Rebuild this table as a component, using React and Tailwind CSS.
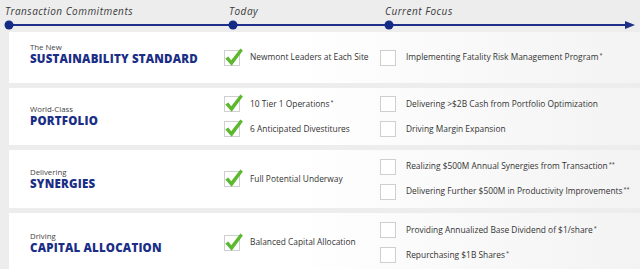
import React from "react";

const CARDS = [
  {
    pre: "The New",
    title: "SUSTAINABILITY STANDARD",
    h: "h-[51px]",
    labelShift: "mb-[8px]",
    today: [["Newmont Leaders at Each Site", ""]],
    focus: [["Implementing Fatality Risk Management Program", "*"]],
  },
  {
    pre: "World-Class",
    title: "PORTFOLIO",
    h: "h-[57px]",
    labelShift: "mb-[2px]",
    today: [
      ["10 Tier 1 Operations", "*"],
      ["6 Anticipated Divestitures", ""],
    ],
    focus: [
      ["Delivering >$2B Cash from Portfolio Optimization", ""],
      ["Driving Margin Expansion", ""],
    ],
  },
  {
    pre: "Delivering",
    title: "SYNERGIES",
    h: "h-[58px]",
    labelShift: "",
    today: [["Full Potential Underway", ""]],
    focus: [
      ["Realizing $500M Annual Synergies from Transaction", "**"],
      ["Delivering Further $500M in Productivity Improvements", "**"],
    ],
  },
  {
    pre: "Driving",
    title: "CAPITAL ALLOCATION",
    h: "h-[59px]",
    labelShift: "",
    today: [["Balanced Capital Allocation", ""]],
    focus: [
      ["Providing Annualized Base Dividend of $1/share", "*"],
      ["Repurchasing $1B Shares", "*"],
    ],
  },
];

function Box({ checked }) {
  return (
    <svg width="22" height="20" viewBox="0 0 22 20" className="shrink-0 overflow-visible">
      <rect x="1.5" y="2.5" width="15" height="15" fill="#fff" stroke="#cfcfcf" strokeWidth="1" />
      {checked && (
        <path d="M2.3 10.6 L5.3 8.4 L8.2 12.2 L17.4 0.6 L19.9 2.5 L8.7 17.8 Z" fill="#5cb82c" />
      )}
    </svg>
  );
}

function Item({ text, star, checked }) {
  return (
    <div className="flex items-center">
      <Box checked={checked} />
      <span className="ml-[5px] whitespace-nowrap text-[8.4px] text-[#333]">
        {text}
        {star && <sup className="ml-[1px] text-[5.5px]">{star}</sup>}
      </span>
    </div>
  );
}

export default function App() {
  return (
    <div className="relative h-[269px] w-[640px] overflow-hidden bg-[#ededed] font-['Open_Sans',sans-serif]">
      <div className="flex h-[20px] items-end pb-[3px] text-[10px] leading-[12px] italic tracking-[0.5px] text-[#3a3a3a]">
        <span className="ml-[5px] w-[224px] shrink-0">Transaction Commitments</span>
        <span className="w-[156px] shrink-0">Today</span>
        <span>Current Focus</span>
      </div>
      <svg width="640" height="12" viewBox="0 0 640 12" className="block">
        <line x1="9" y1="5" x2="628" y2="5" stroke="#1d2f88" strokeWidth="2" />
        <polygon points="625,1 635,5 625,9" fill="#1d2f88" />
        <circle cx="9" cy="5" r="4.5" fill="#152a84" />
        <circle cx="233" cy="5" r="4.5" fill="#152a84" />
        <circle cx="389" cy="5" r="4.5" fill="#152a84" />
      </svg>
      <div className="ml-[9px] flex flex-col gap-[5px]">
        {CARDS.map((c) => (
          <div
            key={c.title}
            className={`flex items-center bg-linear-to-r from-white from-45% to-[#f3f3f3] ${c.h}`}
          >
            <div className={`w-[214px] shrink-0 pl-[21px] ${c.labelShift}`}>
              <div className="text-[7.8px] leading-[10px] text-[#444]">{c.pre}</div>
              <div className="text-[11.5px] leading-[14px] font-extrabold tracking-[0.2px] text-[#1b2e86]">
                {c.title}
              </div>
            </div>
            <div className="flex w-[156px] shrink-0 flex-col gap-[5px]">
              {c.today.map(([t, s]) => (
                <Item key={t} text={t} star={s} checked />
              ))}
            </div>
            <div className="flex shrink-0 flex-col gap-[5px]">
              {c.focus.map(([t, s]) => (
                <Item key={t} text={t} star={s} />
              ))}
            </div>
          </div>
        ))}
      </div>
    </div>
  );
}
